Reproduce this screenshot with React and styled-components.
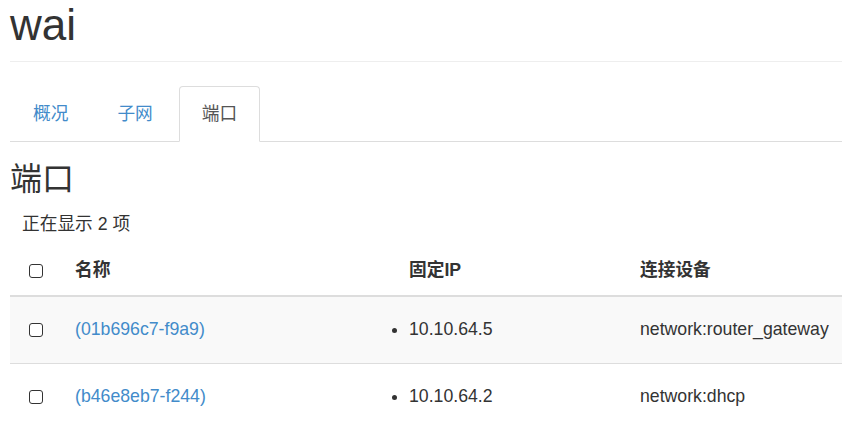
import React from "react";
import styled, { createGlobalStyle } from "styled-components";

const GlobalStyle = createGlobalStyle`
  body {
    margin: 0;
    background: #fff;
    color: #333;
    font-family: "Liberation Sans", "Noto Sans CJK SC", sans-serif;
    font-size: 17.7px;
    line-height: 1.43;
  }
`;

const Page = styled.div`
  padding-left: 10px;
`;

const Title = styled.h1`
  margin: 0;
  padding-top: 1px;
  font-size: 44px;
  font-weight: 400;
  line-height: 48px;
  color: #333;
`;

const Rule = styled.hr`
  margin: 12px 0 24px;
  border: 0;
  border-top: 1px solid #eee;
`;

const Tabs = styled.ul`
  display: flex;
  margin: 0;
  padding: 0;
  list-style: none;
  border-bottom: 1px solid #ddd;
`;

const Tab = styled.li`
  margin: 0 3px -1px 0;
  padding: 15px 22px 14px;
  line-height: 25px;
  border: 1px solid ${(p) => (p.$active ? "#ddd" : "transparent")};
  border-bottom-color: ${(p) => (p.$active ? "#fff" : "transparent")};
  border-radius: 4px 4px 0 0;
  background: ${(p) => (p.$active ? "#fff" : "transparent")};
  color: ${(p) => (p.$active ? "#555" : "#428bca")};
  cursor: pointer;
`;

const SectionTitle = styled.h3`
  margin: 18px 0 0;
  font-size: 32px;
  font-weight: 400;
  line-height: 38px;
`;

const Count = styled.div`
  margin-top: 14px;
  padding-left: 12px;
  line-height: 25px;
`;

const Table = styled.table`
  width: 100%;
  margin-top: 10px;
  border-collapse: collapse;
  table-layout: fixed;
`;

const HeadCell = styled.th`
  height: 48px;
  padding: 0 12px;
  text-align: left;
  font-weight: 700;
  border-bottom: 2px solid #ddd;
  vertical-align: middle;
`;

const Row = styled.tr`
  background: ${(p) => (p.$striped ? "#f9f9f9" : "#fff")};
  border-bottom: 1px solid #ddd;
`;

const Cell = styled.td`
  height: 66px;
  padding: 0 12px;
  vertical-align: middle;
`;

const Check = styled.input.attrs({ type: "checkbox" })`
  appearance: none;
  display: block;
  box-sizing: border-box;
  margin: 0 0 0 7px;
  width: 14px;
  height: 14px;
  border: 1.5px solid #333;
  border-radius: 3px;
  background: #fff;
`;

const Link = styled.a`
  color: #428bca;
  text-decoration: none;
`;

const IpList = styled.ul`
  margin: 0;
  padding: 0;
  list-style: disc outside;
`;

const ports = [
  { id: "(01b696c7-f9a9)", ip: "10.10.64.5", owner: "network:router_gateway" },
  { id: "(b46e8eb7-f244)", ip: "10.10.64.2", owner: "network:dhcp" },
];

export default function App() {
  return (
    <Page>
      <GlobalStyle />
      <Title>wai</Title>
      <Rule />
      <Tabs>
        <Tab>概况</Tab>
        <Tab>子网</Tab>
        <Tab $active>端口</Tab>
      </Tabs>
      <SectionTitle>端口</SectionTitle>
      <Count>正在显示 2 项</Count>
      <Table>
        <colgroup>
          <col style={{ width: 53 }} />
          <col style={{ width: 334 }} />
          <col style={{ width: 231 }} />
          <col />
        </colgroup>
        <thead>
          <tr>
            <HeadCell><Check /></HeadCell>
            <HeadCell>名称</HeadCell>
            <HeadCell>固定IP</HeadCell>
            <HeadCell>连接设备</HeadCell>
          </tr>
        </thead>
        <tbody>
          {ports.map((p, i) => (
            <Row key={p.id} $striped={i % 2 === 0}>
              <Cell><Check /></Cell>
              <Cell><Link href="#">{p.id}</Link></Cell>
              <Cell>
                <IpList><li>{p.ip}</li></IpList>
              </Cell>
              <Cell>{p.owner}</Cell>
            </Row>
          ))}
        </tbody>
      </Table>
    </Page>
  );
}
